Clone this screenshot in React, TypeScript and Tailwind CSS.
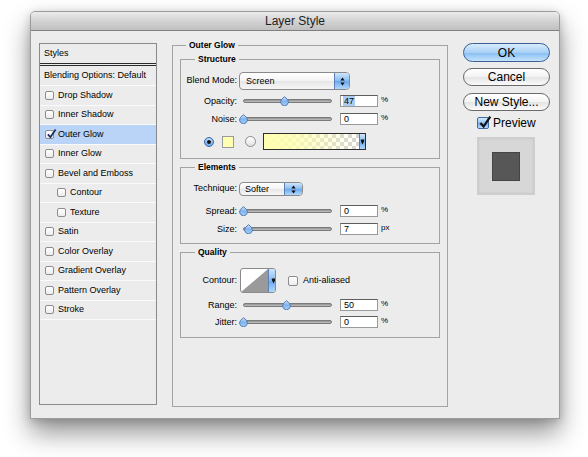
import React from "react";

function Check({ checked = false, size = 9, blue = false }: { checked?: boolean; size?: number; blue?: boolean }) {
  return (
    <div
      className={
        "relative shrink-0 rounded-[2px] border " +
        (blue
          ? "border-[#3f68a5] bg-[linear-gradient(#d6eafd,#8fc2f2_50%,#6eaaea_51%,#b9dcfd)]"
          : "border-[#8c8c8c] bg-[linear-gradient(#ffffff,#ececec)]")
      }
      style={{ width: size, height: size }}
    >
      {checked && (
        <svg className="absolute -top-[3px] left-[0px]" width={size + 2} height={size + 3} viewBox="0 0 12 12">
          <path d="M2 6.5 L4.8 9.5 L10.5 1" fill="none" stroke={blue ? "#111" : "#1b2f5c"} strokeWidth="1.9" />
        </svg>
      )}
    </div>
  );
}

function Thumb() {
  return (
    <svg width="9" height="10" viewBox="0 0 9 10">
      <defs>
        <linearGradient id="tg" x1="0" y1="0" x2="0" y2="1">
          <stop offset="0" stopColor="#cfe5fb" />
          <stop offset="0.5" stopColor="#7fb3ee" />
          <stop offset="1" stopColor="#a9d1fa" />
        </linearGradient>
      </defs>
      <path d="M4.5 0.6 L7.6 3.5 A3.9 3.9 0 1 1 1.4 3.5 Z" fill="url(#tg)" stroke="#4a74ad" strokeWidth="0.9" />
    </svg>
  );
}

function Slider({ pct }: { pct: number }) {
  return (
    <div className="relative ml-[3px] h-[12px] w-[96px] shrink-0">
      <div className="absolute left-[3px] right-[4px] top-[4px] h-[4px] rounded-full border border-[#7a7a7a] bg-[linear-gradient(#8e8e8e,#c4c4c4)]" />
      <div className="absolute top-[1px]" style={{ left: 3 + (pct * 89) / 100 - 4.5 }}>
        <Thumb />
      </div>
    </div>
  );
}

function NumBox({ value, sel = false }: { value: string; sel?: boolean }) {
  return (
    <div className="ml-[4px] flex h-[12px] w-[38px] shrink-0 items-center border border-[#9a9a9a] border-t-[#5e5e5e] bg-white pl-[2px] text-[9px] leading-[10px]">
      <span className={sel ? "bg-[#a9cdf7] px-[1px]" : "px-[1px]"}>{value}</span>
    </div>
  );
}

function SliderRow({ label, pct, value, unit, sel = false, cls }: { label: string; pct: number; value: string; unit: string; sel?: boolean; cls: string }) {
  return (
    <div className={"flex h-[12px] items-center " + cls}>
      <div className="w-[56px] shrink-0 text-right text-[9px] leading-[12px]">{label}</div>
      <Slider pct={pct} />
      <NumBox value={value} sel={sel} />
      <div className="ml-[3px] text-[8px] leading-[10px] self-start">{unit}</div>
    </div>
  );
}

function Stepper() {
  return (
    <svg width="5" height="9" viewBox="0 0 5 9">
      <path d="M2.5 0.5 L4.7 3.4 L0.3 3.4 Z" fill="#111" />
      <path d="M2.5 8.5 L4.7 5.6 L0.3 5.6 Z" fill="#111" />
    </svg>
  );
}

function DownTab({ w }: { w: number }) {
  return (
    <div
      className="flex shrink-0 items-center justify-center border-l border-[#5d80b4] bg-[linear-gradient(#cfe6fd,#84bbf2_50%,#69a8ec_51%,#b3d8fd)]"
      style={{ width: w }}
    >
      <svg width="5" height="6" viewBox="0 0 5 6">
        <path d="M0.8 0.5 L4.2 0.5 L4.2 2 L2.5 5.5 L0.8 2 Z" fill="#111" />
      </svg>
    </div>
  );
}

function Legend({ text, cls }: { text: string; cls: string }) {
  return (
    <div className={"-mt-[6px] h-[10px] w-fit bg-[#ececec] px-[3px] text-[8.5px] font-bold leading-[10px] " + cls}>{text}</div>
  );
}

const styles: { name: string; indent?: boolean; on?: boolean }[] = [
  { name: "Drop Shadow" },
  { name: "Inner Shadow" },
  { name: "Outer Glow", on: true },
  { name: "Inner Glow" },
  { name: "Bevel and Emboss" },
  { name: "Contour", indent: true },
  { name: "Texture", indent: true },
  { name: "Satin" },
  { name: "Color Overlay" },
  { name: "Gradient Overlay" },
  { name: "Pattern Overlay" },
  { name: "Stroke" },
];

export default function App() {
  return (
    <div className="min-h-[457px] w-[588px] bg-white pl-[30px] pt-[11px] font-['Liberation_Sans',Arial,sans-serif] text-black">
      <div className="h-[408px] w-[530px] rounded-t-[5px] border border-[#9c9c9c] bg-[#ececec] shadow-[0_14px_26px_rgba(0,0,0,0.42),0_2px_10px_rgba(0,0,0,0.18)]">
        {/* title bar */}
        <div className="flex h-[19px] items-center justify-center rounded-t-[4px] border-b border-[#808080] bg-[linear-gradient(#ebebeb,#d3d3d3_50%,#c0c0c0)] text-[12px] leading-[14px] text-[#1e1e1e]">
          Layer Style
        </div>

        <div className="flex items-start pl-[8px] pt-[12px]">
          {/* left list */}
          <div className="h-[362px] w-[118px] shrink-0 border border-[#8a8a8a] bg-[#ececec] text-[9px] leading-[11px]">
            <div className="flex h-[22px] items-center border-b-[3px] border-double border-[#2a2a2a] pl-[4px]">Styles</div>
            <div className="flex h-[20px] items-center border-b border-[#fafafa] pl-[4px]">Blending Options: Default</div>
            {styles.map((s) => (
              <div
                key={s.name}
                className={
                  "flex h-[19.5px] items-center gap-[4px] border-b border-[#fafafa] " +
                  (s.indent ? "pl-[17px] " : "pl-[5px] ") +
                  (s.on ? "bg-[#b9d4f6]" : "")
                }
              >
                <Check checked={s.on} size={9} />
                <span>{s.name}</span>
              </div>
            ))}
          </div>

          {/* main group */}
          <div className="ml-[15px] mt-[2px] h-[362px] w-[276px] shrink-0 border border-[#a3a3a3] px-[7px]">
            <Legend text="Outer Glow" cls="ml-[6px]" />

            {/* Structure */}
            <div className="mt-[9px] h-[100px] border border-[#a3a3a3]">
              <Legend text="Structure" cls="ml-[14px]" />
              <div className="mt-[8px] flex h-[18px] items-center">
                <div className="w-[56px] shrink-0 text-right text-[9px]">Blend Mode:</div>
                <div className="ml-[2px] flex h-[18px] w-[111px] overflow-hidden rounded-[4px] border border-[#8a8a8a] bg-[linear-gradient(#ffffff,#f4f4f4_50%,#e6e6e6_51%,#f6f6f6)]">
                  <div className="flex-1 pl-[6px] text-[9px] leading-[16px]">Screen</div>
                  <div className="flex w-[15px] items-center justify-center border-l border-[#5d80b4] bg-[linear-gradient(#cfe6fd,#84bbf2_50%,#69a8ec_51%,#b3d8fd)]">
                    <Stepper />
                  </div>
                </div>
              </div>
              <SliderRow cls="mt-[5px]" label="Opacity:" pct={47} value="47" unit="%" sel />
              <SliderRow cls="mt-[6px]" label="Noise:" pct={0} value="0" unit="%" />
              <div className="mt-[8px] flex h-[17px] items-center">
                <div className="ml-[23px] flex h-[10px] w-[10px] items-center justify-center rounded-full border border-[#3e67a6] bg-[radial-gradient(circle_at_50%_30%,#d8ecfd,#7fb6f0_60%,#5b9be6)]">
                  <div className="h-[4px] w-[4px] rounded-full bg-[#111]" />
                </div>
                <div className="ml-[8px] h-[12px] w-[12px] border border-[#9a9a9a] bg-[#ffffb4]" />
                <div className="ml-[11px] h-[11px] w-[11px] rounded-full border border-[#8c8c8c] bg-[linear-gradient(#ffffff,#e2e2e2)]" />
                <div className="ml-[7px] flex h-[17px] w-[103px] overflow-hidden border border-[#2e2e2e] bg-[repeating-conic-gradient(#d4d4d4_0_25%,#ffffff_0_50%)] bg-[length:8px_8px]">
                  <div className="h-full flex-1 bg-[linear-gradient(to_right,#ffffb0_0%,#ffffb0cc_35%,#ffffb000_100%)]" />
                  <DownTab w={6} />
                </div>
              </div>
            </div>

            {/* Elements */}
            <div className="mt-[8px] h-[77px] border border-[#a3a3a3]">
              <Legend text="Elements" cls="ml-[14px]" />
              <div className="mt-[10px] flex h-[14px] items-center">
                <div className="w-[56px] shrink-0 text-right text-[9px]">Technique:</div>
                <div className="ml-[2px] flex h-[14px] w-[64px] overflow-hidden rounded-[4px] border border-[#8a8a8a] bg-[linear-gradient(#ffffff,#f4f4f4_50%,#e6e6e6_51%,#f6f6f6)]">
                  <div className="flex-1 pl-[5px] text-[9px] leading-[12px]">Softer</div>
                  <div className="flex w-[18px] items-center justify-center border-l border-[#5d80b4] bg-[linear-gradient(#cfe6fd,#84bbf2_50%,#69a8ec_51%,#b3d8fd)]">
                    <Stepper />
                  </div>
                </div>
              </div>
              <SliderRow cls="mt-[9px]" label="Spread:" pct={0} value="0" unit="%" />
              <SliderRow cls="mt-[6px]" label="Size:" pct={6.7} value="7" unit="px" />
            </div>

            {/* Quality */}
            <div className="mt-[8px] h-[86px] border border-[#a3a3a3]">
              <Legend text="Quality" cls="ml-[14px]" />
              <div className="mt-[11px] flex h-[25px] items-center">
                <div className="w-[56px] shrink-0 text-right text-[9px]">Contour:</div>
                <div className="ml-[3px] flex h-[25px] w-[36px] overflow-hidden rounded-[3px] border border-[#8a8a8a] bg-white">
                  <svg width="27" height="23" viewBox="0 0 27 23" className="shrink-0">
                    <polygon points="0,23 27,0 27,23" fill="#9a9a9a" />
                  </svg>
                  <DownTab w={9} />
                </div>
                <div className="ml-[12px]">
                  <Check size={10} />
                </div>
                <div className="ml-[5px] text-[9px]">Anti-aliased</div>
              </div>
              <SliderRow cls="mt-[6px]" label="Range:" pct={49.4} value="50" unit="%" />
              <SliderRow cls="mt-[5px]" label="Jitter:" pct={0} value="0" unit="%" />
            </div>
          </div>

          {/* right column */}
          <div className="ml-[15px] flex w-[87px] shrink-0 flex-col">
            <div className="flex h-[19px] items-center justify-center rounded-full border border-[#3c5f96] bg-[linear-gradient(#d9ecfd,#a9d0f6_50%,#86bdf2_51%,#c4e3fd)] text-[12px]">
              OK
            </div>
            <div className="mt-[6px] flex h-[18px] items-center justify-center rounded-full border border-[#6a6a6a] bg-[linear-gradient(#ffffff,#f3f3f3_50%,#e4e4e4_51%,#fbfbfb)] text-[12px]">
              Cancel
            </div>
            <div className="mt-[7px] flex h-[18px] items-center justify-center rounded-full border border-[#6a6a6a] bg-[linear-gradient(#ffffff,#f3f3f3_50%,#e4e4e4_51%,#fbfbfb)] text-[12px]">
              New Style...
            </div>
            <div className="ml-[14px] mt-[6px] flex h-[12px] items-center gap-[4px]">
              <Check checked blue size={12} />
              <span className="text-[12px] leading-[12px]">Preview</span>
            </div>
            <div className="ml-[14px] mt-[8px] flex h-[58px] w-[58px] items-center justify-center border border-[#cfcfcf] bg-[#d7d7d7] shadow-[inset_0_0_3px_rgba(0,0,0,0.12)]">
              <div className="h-[29px] w-[28px] border border-[#444] bg-[#575757]" />
            </div>
          </div>
        </div>
      </div>
    </div>
  );
}
